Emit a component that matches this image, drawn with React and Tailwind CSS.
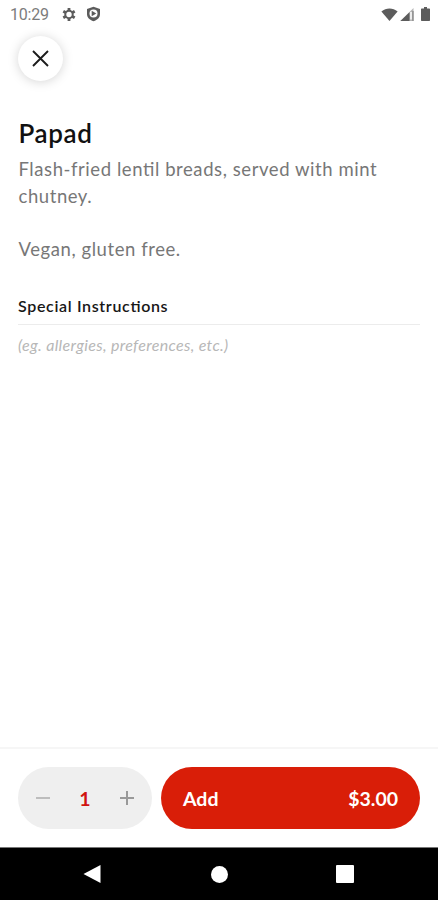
import React from "react";

function StatusBar() {
  return (
    <div className="flex h-[28px] shrink-0 items-center justify-between pl-[10px] pr-[8px] text-[#5c5c5c]">
      <div className="flex items-center">
        <span className="w-[52px] whitespace-nowrap pt-px font-[Roboto,sans-serif] text-[16px] leading-[20px] tracking-[-0.2px] text-[#7c7c7c]">10:29</span>
        <svg className="h-[15px] w-[14px]" viewBox="0 0 14 15">
          <path d="M7 1v13M1.300 4.200l11.400 6.600M12.700 4.200 1.300 10.800" stroke="currentColor" strokeWidth="2.800" />
          <circle cx="7" cy="7.500" r="3.700" fill="#fff" stroke="currentColor" strokeWidth="2" />
        </svg>
        <svg className="ml-[10px] h-[16px] w-[15px]" viewBox="0 0 15 16">
          <path d="M7.500 .7 14 3v5c0 3.500-2.500 6-6.500 7.300C3.500 14 1 11.500 1 8V3z" fill="currentColor" />
          <circle cx="7.500" cy="7.500" r="4" fill="#fff" />
          <path d="M5.700 4.700 10.300 7.500 5.700 10.300z" fill="currentColor" />
        </svg>
      </div>
      <div className="flex items-center">
        <svg className="h-[13px] w-[17px]" viewBox="0 0 17 13" fill="currentColor">
          <path d="M.4 3.500C5-.4 12-.4 16.600 3.500L8.500 13z" />
        </svg>
        <svg className="ml-[2px] h-[13px] w-[14px]" viewBox="0 0 14 13">
          <path d="M13.500 0V13H.4z" fill="#b5b5b5" />
          <path d="M9.500 4.200V13H.4z" fill="currentColor" />
          <path d="M11 4v7.500" stroke="#fff" strokeWidth="1.500" />
          <path d="M13 3v10" stroke="#777" strokeWidth="1" />
        </svg>
        <svg className="ml-[7px] h-[14px] w-[9px]" viewBox="0 0 9 14" fill="currentColor">
          <path d="M3 0h3v1.500h2.300q.7 0 .7.700v11q0 .8-.7.800H.7q-.7 0-.7-.8v-11q0-.7.700-.7H3z" />
        </svg>
      </div>
    </div>
  );
}

function Quantity() {
  return (
    <div className="flex h-[62px] w-[134px] items-center justify-between rounded-full bg-[#efefef] px-[18px]">
      <button aria-label="Decrease" className="flex">
        <svg className="h-[14px] w-[14px]" viewBox="0 0 14 14" stroke="#bdbdbd" strokeWidth="2">
          <path d="M0 7h14" />
        </svg>
      </button>
      <span className="pt-px text-[19.5px] font-bold leading-[24px] text-[#d0140f]">1</span>
      <button aria-label="Increase" className="flex">
        <svg className="h-[14px] w-[14px]" viewBox="0 0 14 14" stroke="#999" strokeWidth="2">
          <path d="M0 7h14M7 0v14" />
        </svg>
      </button>
    </div>
  );
}

export default function App() {
  return (
    <div className="flex h-[900px] w-[438px] flex-col overflow-hidden bg-white font-[Lato,sans-serif] [font-feature-settings:'liga'_1]">
      <StatusBar />
      <header className="flex h-[85px] shrink-0 pl-[18px] pt-[8px]">
        <button aria-label="Close" className="flex h-[45px] w-[45px] items-center justify-center rounded-full bg-white shadow-[0_1px_11px_rgba(0,0,0,0.17)]">
          <svg className="h-[17px] w-[17px]" viewBox="0 0 17 17" stroke="#1c1c1c" strokeWidth="1.900">
            <path d="M1 1 16 16M16 1 1 16" />
          </svg>
        </button>
      </header>
      <main className="flex-1 px-[18px]">
        <h1 className="pl-[0.5px] pt-[4px] text-[26px] font-semibold leading-[32px] tracking-[0.6px] text-[#111]">Papad</h1>
        <p className="mt-[7px] pl-[0.5px] text-[18.5px] leading-[26.7px] tracking-[0.57px] text-[#777]">
          Flash-fried lentil breads, served with mint<br />chutney.<br /><br />Vegan, gluten free.
        </p>
        <h2 className="mt-[32px] text-[16px] font-semibold leading-[22px] tracking-[0.66px] text-[#171717]">Special Instructions</h2>
        <div className="mt-[7px] border-t border-[#ececec] pt-[9px] text-[16px] italic leading-[22px] tracking-[0.32px] text-[#b7b7b7]">(eg. allergies, preferences, etc.)</div>
      </main>
      <footer className="flex h-[100px] shrink-0 gap-[9px] border-t-2 border-[#f6f6f6] px-[18px] pt-[18px]">
        <Quantity />
        <button className="flex h-[62px] flex-1 items-center justify-between rounded-full bg-[#d91e08] px-[22px] pt-px text-[19.5px] font-bold leading-[24px] text-white">
          <span>Add</span>
          <span>$3.00</span>
        </button>
      </footer>
      <nav className="flex h-[53px] shrink-0 items-center justify-between border-t border-[#777] bg-black pl-[83px] pr-[84px]">
        <svg className="h-[20px] w-[18px]" viewBox="0 0 18 20" fill="#fff"><path d="M17.500 1v18L.5 10z" /></svg>
        <div className="ml-px h-[17px] w-[17px] rounded-full bg-white" />
        <div className="h-[18px] w-[18px] rounded-[1px] bg-white" />
      </nav>
    </div>
  );
}
